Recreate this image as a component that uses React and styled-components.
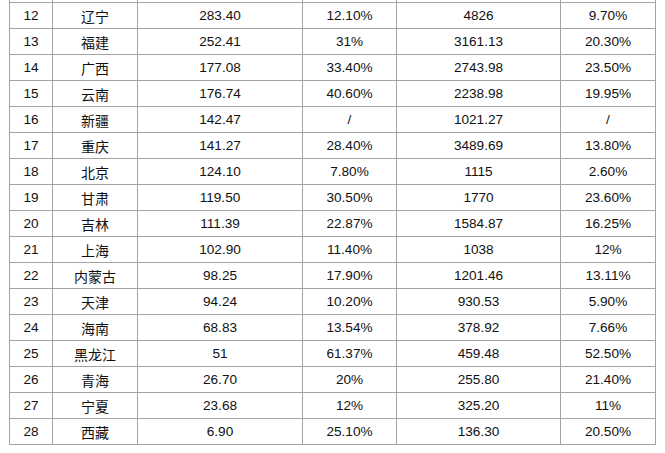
import React from "react";
import styled, { createGlobalStyle } from "styled-components";

const GlobalStyle = createGlobalStyle`
  html, body {
    margin: 0;
    padding: 0;
    background: #ffffff;
  }
  body {
    font-family: "Liberation Sans", Arial, "Noto Sans CJK SC", sans-serif;
  }
`;

const Page = styled.div`
  padding: 0 0 0 9px;
  width: 665px;
  height: 453px;
  overflow: hidden;
  box-sizing: border-box;
`;

const Table = styled.table`
  border-collapse: collapse;
  table-layout: fixed;
  width: 646px;
  color: #111111;
  font-size: 14px;
`;

const Cell = styled.td`
  border: 1px solid #a3a3a3;
  height: 25px;
  padding: 0;
  text-align: center;
  vertical-align: middle;
  line-height: 16px;
  font-family: ${(p) =>
    p.$cjk
      ? '"Noto Sans CJK SC", sans-serif'
      : '"Liberation Sans", Arial, sans-serif'};
  font-size: ${(p) => (p.$cjk ? "14px" : "13.6px")};
`;

const Spacer = styled.td`
  border-left: 1px solid #a3a3a3;
  border-right: 1px solid #a3a3a3;
  height: 2px;
  padding: 0;
`;

const rows = [
  ["12", "辽宁", "283.40", "12.10%", "4826", "9.70%"],
  ["13", "福建", "252.41", "31%", "3161.13", "20.30%"],
  ["14", "广西", "177.08", "33.40%", "2743.98", "23.50%"],
  ["15", "云南", "176.74", "40.60%", "2238.98", "19.95%"],
  ["16", "新疆", "142.47", "/", "1021.27", "/"],
  ["17", "重庆", "141.27", "28.40%", "3489.69", "13.80%"],
  ["18", "北京", "124.10", "7.80%", "1115", "2.60%"],
  ["19", "甘肃", "119.50", "30.50%", "1770", "23.60%"],
  ["20", "吉林", "111.39", "22.87%", "1584.87", "16.25%"],
  ["21", "上海", "102.90", "11.40%", "1038", "12%"],
  ["22", "内蒙古", "98.25", "17.90%", "1201.46", "13.11%"],
  ["23", "天津", "94.24", "10.20%", "930.53", "5.90%"],
  ["24", "海南", "68.83", "13.54%", "378.92", "7.66%"],
  ["25", "黑龙江", "51", "61.37%", "459.48", "52.50%"],
  ["26", "青海", "26.70", "20%", "255.80", "21.40%"],
  ["27", "宁夏", "23.68", "12%", "325.20", "11%"],
  ["28", "西藏", "6.90", "25.10%", "136.30", "20.50%"],
];

const widths = [43, 85, 165, 94, 164, 95];

export default function App() {
  return (
    <Page>
      <GlobalStyle />
      <Table>
        <colgroup>
          {widths.map((w, i) => (
            <col key={i} style={{ width: w }} />
          ))}
        </colgroup>
        <tbody>
          <tr>
            {widths.map((w, i) => (
              <Spacer key={i} />
            ))}
          </tr>
          {rows.map((r) => (
            <tr key={r[0]}>
              {r.map((v, i) => (
                <Cell key={i} $cjk={i === 1}>
                  {v}
                </Cell>
              ))}
            </tr>
          ))}
        </tbody>
      </Table>
    </Page>
  );
}
